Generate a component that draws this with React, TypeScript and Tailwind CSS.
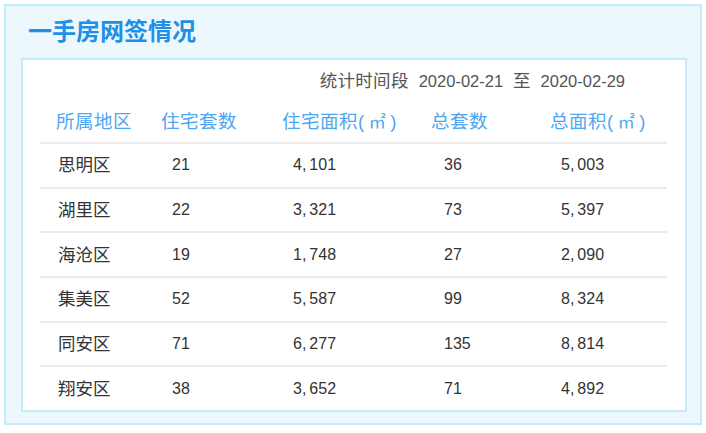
const rows = [
  ["思明区", "21", "4,101", "36", "5,003"],
  ["湖里区", "22", "3,321", "73", "5,397"],
  ["海沧区", "19", "1,748", "27", "2,090"],
  ["集美区", "52", "5,587", "99", "8,324"],
  ["同安区", "71", "6,277", "135", "8,814"],
  ["翔安区", "38", "3,652", "71", "4,892"],
];

const heads = ["所属地区", "住宅套数", "住宅面积", "总套数", "总面积"];
const headPad = ["pl-[16px]", "pl-[11px]", "pl-[12px]", "pl-[11px]", "pl-[10px]"];
const cellPad = ["pl-[18px]", "pl-[22px]", "pl-[23px]", "pl-[24px]", "pl-[21px]"];

function Num({ v }: { v: string }) {
  const [a, b] = v.split(",");
  if (b === undefined) return <>{a}</>;
  return (
    <>
      {a},<span className="ml-[3px]">{b}</span>
    </>
  );
}

export default function App() {
  return (
    <div
      className="w-[706px] h-[433px] bg-white p-[4px]"
      style={{ fontFamily: '"Liberation Sans", "Noto Sans CJK SC", sans-serif' }}
    >
      <div className="w-[698px] h-[421px] border-2 border-[#c6ecf8] bg-[#ecf8fe] flex flex-col">
        <div className="h-[52px] flex items-center pl-[22px]">
          <h1 className="text-[24px] font-bold text-[#1f8fe8] leading-none">一手房网签情况</h1>
        </div>
        <div className="ml-[15px] w-[666px] h-[354px] border-2 border-[#c6ecf8] bg-white px-[17px] overflow-hidden">
          <div className="h-[42px] flex items-center justify-end pr-[43px] gap-[10px] text-[17.5px] text-[#555]">
            <span className="tracking-[0.3px]">统计时间段</span>
            <span className="text-[16.5px]">2020-02-21</span>
            <span>至</span>
            <span className="text-[16.5px]">2020-02-29</span>
          </div>
          <div className="w-[627px]">
            <div className="grid grid-cols-[110px_120px_150px_120px_1fr] h-[40px] items-center text-[18.5px] text-[#4ea6f0] tracking-[0.5px]">
              {heads.map((h, i) => (
                <div key={h} className={headPad[i]}>
                  {h}
                  {(i === 2 || i === 4) && (
                    <>
                      (<span className="mx-[4px] text-[17px]">㎡</span>)
                    </>
                  )}
                </div>
              ))}
            </div>
            {rows.map((r) => (
              <div
                key={r[0]}
                className="grid grid-cols-[110px_120px_150px_120px_1fr] h-[44.7px] items-center border-t-2 border-[#ebebeb] text-[#333]"
              >
                {r.map((c, i) => (
                  <div key={i} className={`${cellPad[i]} ${i === 0 ? "text-[17.5px]" : "text-[16px]"}`}>
                    {i === 0 ? c : <Num v={c} />}
                  </div>
                ))}
              </div>
            ))}
          </div>
        </div>
      </div>
    </div>
  );
}
